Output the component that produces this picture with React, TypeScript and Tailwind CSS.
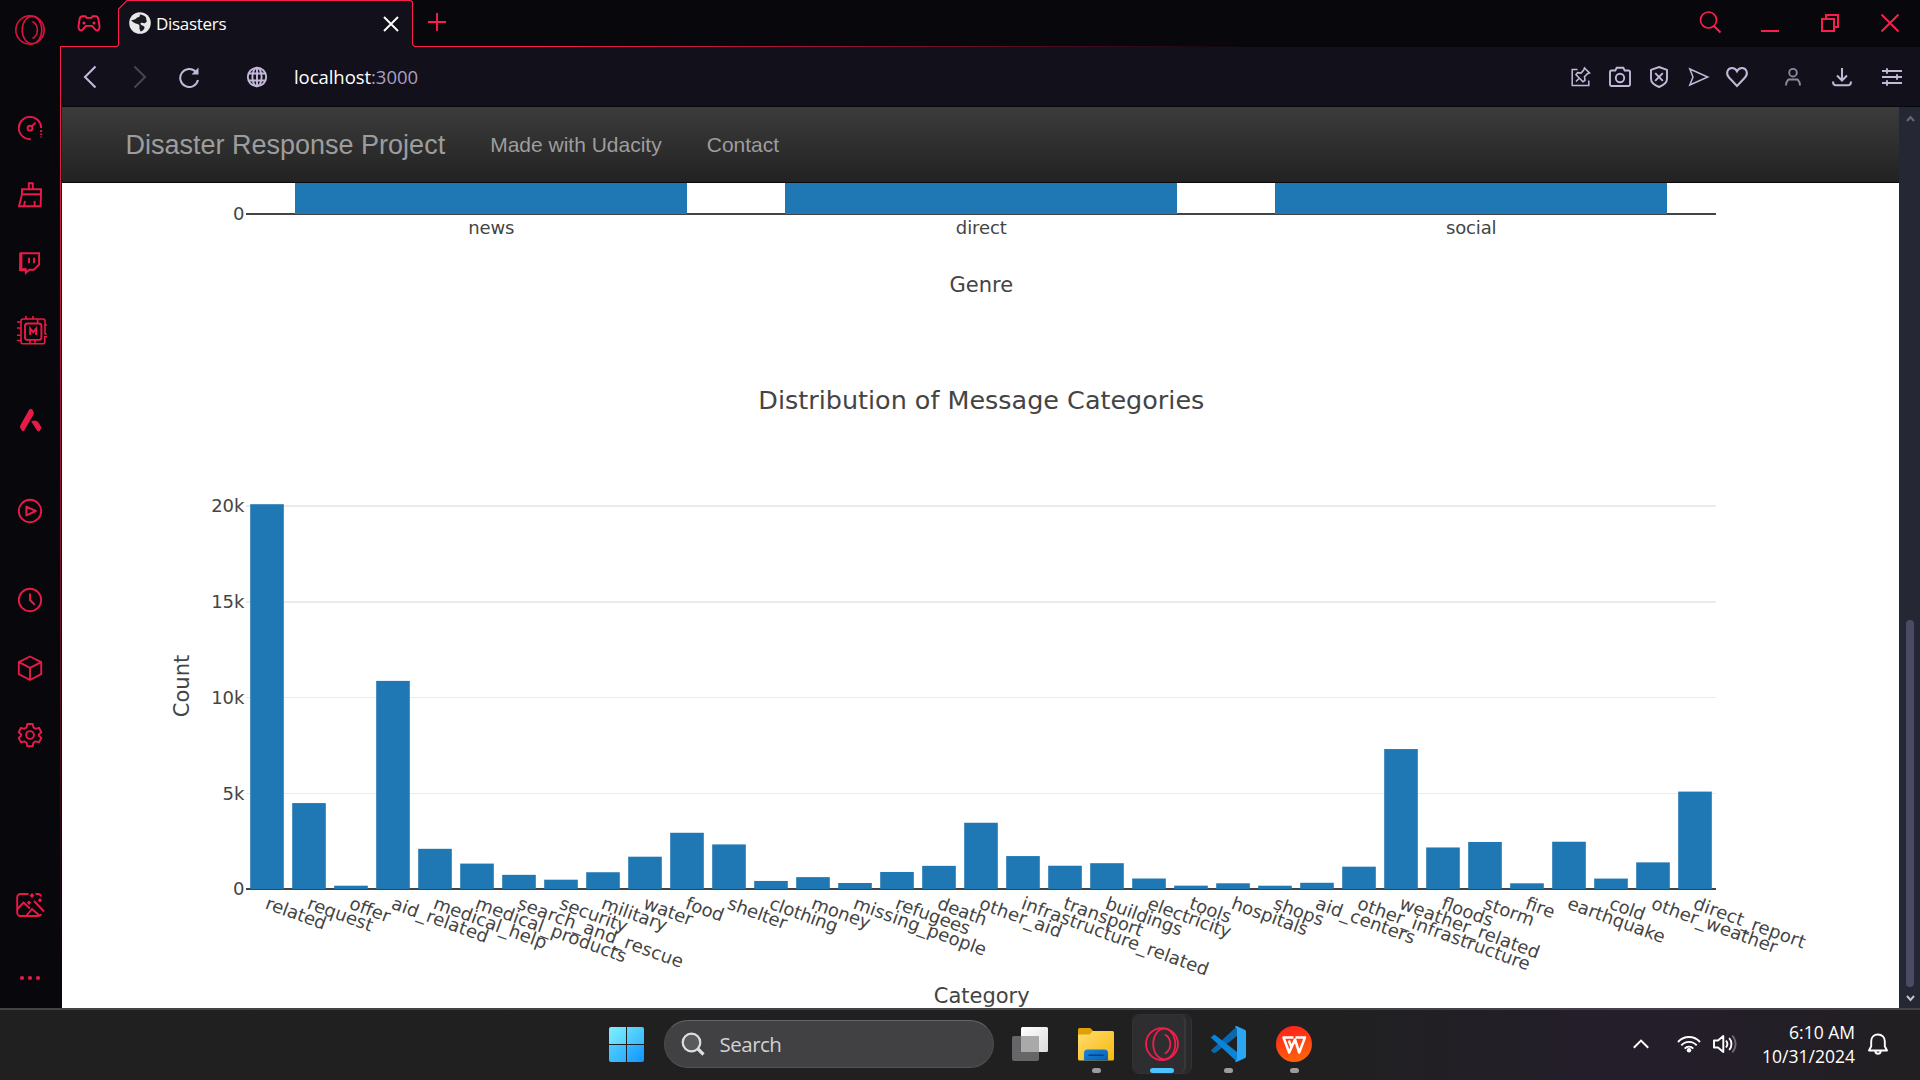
import React from "react";

type IconProps = { w: number; h?: number; vb?: string; className?: string; children: React.ReactNode };

function Icon({ w, h = w, vb, className = "", children }: IconProps) {
  return (
    <svg
      width={w}
      height={h}
      viewBox={vb ?? `0 0 ${w} ${h}`}
      fill="none"
      stroke="currentColor"
      strokeWidth={1.9}
      className={`block shrink-0 ${className}`}
    >
      {children}
    </svg>
  );
}

function OperaMark() {
  return (
    <>
      <circle cx="16" cy="16" r="14.2" />
      <ellipse cx="18" cy="16" rx="9.8" ry="13.6" />
      <path d="M18.5 7.5c6.5 3.5 6.5 13.5 0 17" />
    </>
  );
}

const sidebarItems: { cls: string; art: React.ReactNode }[] = [
  { cls: "mt-[14px] text-[#d9143f]", art: <g strokeWidth={1.6}><OperaMark /></g> },
  {
    cls: "mt-[66px]",
    art: (
      <>
        <path d="M16.8 27.2A11.2 11.2 0 1 1 27.2 16" />
        <circle cx="16" cy="16.2" r="2.4" />
        <path d="M17.8 14.4l3.8-3.8" />
        <path d="M27.2 18v2M27.2 21.5v1.6M27.2 24.5v1" />
      </>
    ),
  },
  {
    cls: "mt-[35px]",
    art: (
      <>
        <path d="M14.8 10V4.2h4V10M8 10.2h19v5H8zM8 15.2L5 27.2h21.6l.4-12M10 27l1-5M20.6 27v-5" />
      </>
    ),
  },
  {
    cls: "mt-[36px]",
    art: (
      <>
        <path d="M6.5 6.2h18.6v11.3l-5.3 5.3h-4.6l-3.4 3v-3H6z" />
        <path d="M6.9 6v17.4M5.5 22.8h7" strokeWidth={3} />
        <path d="M15 10.8v5.4M20 10.8v5.4" />
      </>
    ),
  },
  {
    cls: "mt-[36px] ml-[2px]",
    art: (
      <>
        <rect x="10" y="8.5" width="16.4" height="16.4" rx="2.5" />
        <path d="M32 18.500M32 21.800h-2.200v5a2 2 0 0 1-2 2H8a2 2 0 0 1-2-2V6a2 2 0 0 1 2-2h20a2 2 0 0 1 2 2v12.500l1.500 1" strokeWidth={1.600} />
        <path d="M30 10h2M11 4V1M18 4V1M22.600 8V4M2 7h4M2 13h4M2 20.200h4M2 25.500h4M15 29v-4M20 29v-4" strokeWidth={1.600} />
        <path d="M15.200 20v-6.500l3 3.600 3-3.600V20" strokeWidth={2} />
      </>
    ),
  },
  {
    cls: "mt-[57px]",
    art: (
      <g fill="currentColor" stroke="none">
        <path d="M14.8 6.3c1-1.8 3.500-1.800 4.100.3l.8 1.800c.3.9.2 1.500-.3 2.400L10.200 26.600c-.6 1-1.800 1-2.300 0L6.300 24c-.4-.9-.4-1.800.1-2.700z" />
        <path d="M17.300 17.200c3.600-1.200 6.100-.7 7.600 2l2.100 3.500c.4.8.3 1.200-.1 2l-1 1.800c-.7 1.200-2 1.200-2.800 0l-5.600-8.500z" />
      </g>
    ),
  },
  {
    cls: "mt-[59px]",
    art: (
      <>
        <circle cx="16" cy="16" r="11.2" />
        <path d="M12.400 11.600v8.800l9.400-4.400z" strokeLinejoin="round" strokeWidth={2} />
      </>
    ),
  },
  {
    cls: "mt-[57px]",
    art: (
      <>
        <circle cx="16" cy="16" r="11.2" />
        <path d="M16 9.500V16l4.800 4.800" strokeWidth={2} />
      </>
    ),
  },
  {
    cls: "mt-[36px]",
    art: (
      <path d="M16 4.500l11.200 5.600v12L16 28 4.800 22.100v-12zM4.800 10.100L16 15.800l11.200-5.700M16 15.800V28" strokeLinejoin="round" />
    ),
  },
  {
    cls: "mt-[35px]",
    art: (
      <>
        <circle cx="16" cy="16" r="3.900" />
        <path
          strokeLinejoin="round"
          d="M13.300 5h5.400l.7 3.400 2.300 1.400 3.300-1 2.300 4.500-2.400 2.200v1.200l2.400 2.200-2.300 4.500-3.300-1-2.300 1.400-.7 3.400h-5.400l-.7-3.400-2.300-1.400-3.300 1-2.300-4.500 2.400-2.200v-1.200L4.700 13.300 7 8.800l3.300 1 2.300-1.400z"
        />
      </>
    ),
  },
  {
    cls: "mt-[138px]",
    art: (
      <>
        <path d="M14.500 5H6.500A3.200 3.200 0 0 0 3.200 8.200v15.600A3.200 3.200 0 0 0 6.500 27h18a3 3 0 0 0 2.700-2M21.500 5h2a3.200 3.200 0 0 1 3.500 2.500" />
        <path d="M3.500 20l6-6.500L16 19.500M12.500 26.500l5.500-6.500 7.500 6.500M20 12l10 10.500" />
        <g fill="currentColor" stroke="none">
          <path d="M18 4l2.500 2.500L18 9l-2.500-2.500zM15 11.500l2.200 2.200-2.200 2.200-2.200-2.200zM26 9l2.200 2.200-2.200 2.200-2.200-2.200z" />
        </g>
      </>
    ),
  },
  {
    cls: "mt-[41px]",
    art: (
      <g fill="currentColor" stroke="none">
        <circle cx="8" cy="16" r="2.100" />
        <circle cx="16" cy="16" r="2.100" />
        <circle cx="24" cy="16" r="2.100" />
      </g>
    ),
  },
];

function Sidebar() {
  return (
    <nav className="flex h-[1008px] w-[62px] shrink-0 bg-[#08070c]">
      <div className="flex w-[60px] flex-col items-center text-[#e81b48]">
        {sidebarItems.map((it, i) => (
          <div key={i} className={it.cls}>
            <Icon w={32}>{it.art}</Icon>
          </div>
        ))}
      </div>
      <div className="mt-[46px] h-[940px] w-px bg-linear-to-b from-[#fa1e4e] via-[#8a1432] to-transparent" />
    </nav>
  );
}

function TabStrip() {
  return (
    <header className="relative flex h-[47px] w-full items-center bg-[#08070c] text-[#fa1e4e]">
      <svg className="absolute top-0 left-[-2px]" width="1860" height="47" viewBox="60 0 1860 47" fill="none">
        <defs>
          <linearGradient id="edge" gradientUnits="userSpaceOnUse" x1="60" y1="0" x2="1250" y2="0">
            <stop offset="0" stopColor="#fa1e4e" />
            <stop offset="0.4" stopColor="#fa1e4e" />
            <stop offset="1" stopColor="#fa1e4e" stopOpacity="0" />
          </linearGradient>
        </defs>
        <path d="M118.500 47V9l9-9H411l1.500 2v43l1.500 2z" fill="#12101a" />
        <path
          d="M61 46.500H117l1.500-1.500V9l8.500-8.500H411l1.500 1.500v42.500l2 2H1250"
          stroke="url(#edge)"
          strokeWidth="1.100"
        />
      </svg>
      <div className="relative flex h-full w-full items-center">
        <Icon w={24} h={20} className="ml-[15px]">
          <path
            d="M5.500 3.200h3l1 1.600h5l1-1.600h3c1.800 0 2.700 1.400 3 3.200l1 6.600c.4 4.400-2.400 5.400-4.400 3.200l-3-3.400H8.900l-3 3.400c-2 2.200-4.800 1.200-4.400-3.200l1-6.600c.3-1.800 1.200-3.200 3-3.200z"
            transform="translate(0 -.9)"
          />
          <circle cx="7" cy="9" r="1.500" fill="currentColor" stroke="none" />
          <circle cx="17" cy="9" r="1.500" fill="currentColor" stroke="none" />
        </Icon>
        <div className="ml-[28px] flex h-full w-[288px] items-center">
          <Icon w={22} className="-mt-px text-[#e6e8ea]">
            <circle cx="11" cy="11" r="10.800" fill="currentColor" stroke="none" />
            <path
              d="M2 8.500c2 1 3.500 3 5.500 3.200 1.800.3 3.500 1.200 3 3.200-.5 1.600.5 2.800 1 4.600 2.500-.5 3.500-2 4-3.700.3-1.400-1-2-2.800-2.600-1.600-.6-1.600-2-.5-2.400 1.500-.4 2.600.8 4 .2l1.600-1.400-1-4.600C15 3.500 13 2.500 10.500 2.500 11.500 4 10.500 5 9 5.200c-2 .3-1.500 2-3.500 2.300z"
              fill="#1a1c22"
              stroke="none"
            />
          </Icon>
          <span className="ml-[5px] w-[227px] font-['Open_Sans',sans-serif] text-[17px] tracking-[-0.3px] text-white">
            Disasters
          </span>
          <Icon w={16} className="text-white">
            <path d="M1 1l14 14M15 1L1 15" />
          </Icon>
        </div>
        <Icon w={18} className="ml-[11px] -mt-[3px]">
          <path d="M9 0v18M0 9h18" />
        </Icon>
        <Icon w={24} className="-mt-px ml-auto">
          <circle cx="10.500" cy="9" r="8" strokeWidth={1.700} />
          <path d="M16 15l6.500 6.500" strokeWidth={2.200} />
        </Icon>
        <Icon w={18} h={2} className="ml-[39px] mt-[15px]">
          <path d="M0 1h18" strokeWidth={2} />
        </Icon>
        <Icon w={18} className="ml-[42px] -mt-px">
          <path d="M1 5h12v12H1zM5 5V1h12v12h-4" strokeWidth={2} />
        </Icon>
        <Icon w={18} className="mr-[21px] ml-[42px] -mt-px">
          <path d="M.5.5l17 17M17.500.5l-17 17" strokeWidth={2} />
        </Icon>
      </div>
    </header>
  );
}

function Toolbar() {
  return (
    <div className="flex h-[60px] w-full items-center border-b border-[#08070c] bg-[#12101a] text-[#c3b8d9]">
      <Icon w={14} h={24} className="ml-[21px]">
        <path d="M12.500 1.500L2 12l10.500 10.500" strokeWidth={2.100} />
      </Icon>
      <Icon w={14} h={24} className="ml-[36px] text-[#474352]">
        <path d="M1.500 1.500L12 12 1.500 22.500" strokeWidth={2.100} />
      </Icon>
      <Icon w={22} className="ml-[31px]">
        <path d="M17.800 5.800A9 9 0 1 0 20 14" strokeWidth={2} />
        <path d="M20.500 1.500v7h-7z" fill="currentColor" stroke="none" />
      </Icon>
      <Icon w={22} className="ml-[46px]">
        <circle cx="11" cy="11" r="9.200" />
        <ellipse cx="11" cy="11" rx="4.600" ry="9.200" />
        <path d="M2.500 7.500h17M2.500 14.500h17M11 2v18" />
      </Icon>
      <div className="ml-[26px] font-['Open_Sans',sans-serif] text-[18.500px] tracking-[-0.05px] text-white">
        localhost<span className="text-[#a99fc0]">:3000</span>
      </div>
      <Icon w={24} className="ml-auto">
        <path d="M8.500 4.500H3.200v16h16.600v-5" strokeWidth={1.500} />
        <path d="M15.500 3l5 5-2 .8-3 3 .5 3.500-2 1.400-7-7 1.600-2 3.400.4 2.700-3zM10.500 13L7 16.500" strokeWidth={1.600} />
      </Icon>
      <Icon w={24} className="ml-[15px]">
        <path d="M3.500 5.500h3.800l1.400-2.700h6.600l1.400 2.700h3.800a1.500 1.500 0 0 1 1.500 1.500v12.500a1.500 1.500 0 0 1-1.500 1.500h-17A1.500 1.500 0 0 1 2 19.500V7a1.500 1.500 0 0 1 1.500-1.500z" />
        <circle cx="12" cy="13" r="4.200" />
      </Icon>
      <Icon w={24} className="ml-[15px]">
        <path d="M12 2l8 2.800v9c0 4-4 6.700-8 8.200-4-1.500-8-4.200-8-8.200v-9z" />
        <path d="M8.200 8.200l7.600 7.600M15.800 8.200l-7.600 7.600" />
      </Icon>
      <Icon w={24} className="ml-[16px]">
        <path d="M2.800 4l18 8-18 8L6 12z" strokeWidth={1.500} />
      </Icon>
      <Icon w={24} className="ml-[14px]">
        <path d="M12 21L4 12.500C.3 8.500 2.500 3 7 3c2.300 0 4 1.200 5 3.200C13 4.200 14.700 3 17 3c4.500 0 6.700 5.500 3 9.500z" strokeWidth={2} />
      </Icon>
      <Icon w={24} className="ml-[32px] text-[#8f879f]">
        <circle cx="12" cy="7.700" r="3.800" />
        <path d="M5 20.500c0-2.800.8-4.400 2.400-6h9.200c1.600 1.600 2.400 3.200 2.400 6" strokeWidth={2} />
      </Icon>
      <Icon w={24} className="ml-[25px]">
        <path d="M12 3v12M7 10.500l5 5 5-5M3 16.500c0 2.500 1 3.700 3 3.700h12c2 0 3-1.200 3-3.700" strokeWidth={2} />
      </Icon>
      <Icon w={24} className="mr-[16px] ml-[26px]">
        <path d="M2 6h20M2 12h20M2 18h20M7 3.300v5.400M17 9.300v5.400M7 15.300v5.400" />
      </Icon>
    </div>
  );
}

const categories: [string, number][] = [
  ["related", 20094],
  ["request", 4474],
  ["offer", 118],
  ["aid_related", 10860],
  ["medical_help", 2084],
  ["medical_products", 1313],
  ["search_and_rescue", 724],
  ["security", 471],
  ["military", 860],
  ["water", 1672],
  ["food", 2923],
  ["shelter", 2314],
  ["clothing", 405],
  ["money", 604],
  ["missing_people", 298],
  ["refugees", 875],
  ["death", 1194],
  ["other_aid", 3446],
  ["infrastructure_related", 1705],
  ["transport", 1201],
  ["buildings", 1333],
  ["electricity", 532],
  ["tools", 159],
  ["hospitals", 283],
  ["shops", 120],
  ["aid_centers", 309],
  ["other_infrastructure", 1151],
  ["weather_related", 7297],
  ["floods", 2155],
  ["storm", 2443],
  ["fire", 282],
  ["earthquake", 2455],
  ["cold", 530],
  ["other_weather", 1376],
  ["direct_report", 5075],
];

const PLOT_LEFT = 246;
const PLOT_RIGHT = 1716;
const BASE = 888.7;
const PER_COUNT = 0.019135;
const MIN_BAR = 3;
const chartText = "font-['Verdana','DejaVu_Sans',sans-serif]";

// Verdana advance widths in em, so tick labels keep their length in a fallback face.
const advance: Record<string, number> = {
  a: 0.601, b: 0.623, c: 0.521, d: 0.623, e: 0.596, f: 0.352, g: 0.623, h: 0.633, i: 0.274,
  j: 0.344, k: 0.592, l: 0.274, m: 0.973, n: 0.633, o: 0.607, p: 0.623, q: 0.623, r: 0.427,
  s: 0.521, t: 0.394, u: 0.633, v: 0.592, w: 0.818, x: 0.592, y: 0.592, z: 0.525, _: 0.636,
};
const labelWidth = (s: string) => 18 * [...s].reduce((sum, c) => sum + (advance[c] ?? 0.6), 0);

const gridLines = [
  { label: "5k", y: 793, h: 1, base: 799.5 },
  { label: "10k", y: 697, h: 1, base: 704 },
  { label: "15k", y: 601, h: 2, base: 608 },
  { label: "20k", y: 505, h: 2, base: 512 },
];

function GenreChart() {
  const genres: [string, number][] = [["news", 491], ["direct", 981], ["social", 1471]];
  return (
    <svg className={`block ${chartText}`} width="1837" height="167" viewBox="62 183 1837 167" fill="#444" fontSize="18">
      <rect x={PLOT_LEFT} y="213" width={PLOT_RIGHT - PLOT_LEFT} height="2" />
      {genres.map(([name, x]) => (
        <g key={name}>
          <rect x={x - 196} y="183" width="392" height="31" fill="#1f77b4" />
          <text x={x + 0.3} y="234" textAnchor="middle" textLength={labelWidth(name)}>{name}</text>
        </g>
      ))}
      <text x="244.500" y="220" textAnchor="end">0</text>
      <text x="981.300" y="291.700" textAnchor="middle" fontSize="21">Genre</text>
    </svg>
  );
}

function CategoryChart() {
  const step = (PLOT_RIGHT - PLOT_LEFT) / categories.length;
  return (
    <svg className={`block ${chartText}`} width="1837" height="658" viewBox="62 350 1837 658" fill="#444" fontSize="18">
      <text x="981.300" y="408.500" textAnchor="middle" fontSize="25.500" textLength="446" lengthAdjust="spacingAndGlyphs">
        Distribution of Message Categories
      </text>
      {gridLines.map((g) => (
        <g key={g.label}>
          <rect x={PLOT_LEFT} y={g.y} width={PLOT_RIGHT - PLOT_LEFT} height={g.h} fill="#ebebeb" />
          <text x="244.500" y={g.base} textAnchor="end">{g.label}</text>
        </g>
      ))}
      <text x="244.500" y="895" textAnchor="end">0</text>
      <rect x={PLOT_LEFT} y="888" width={PLOT_RIGHT - PLOT_LEFT} height="2" />
      {categories.map(([name, count], i) => {
        const cx = PLOT_LEFT + step * (i + 0.5);
        const h = Math.max(count * PER_COUNT, MIN_BAR);
        return <rect key={name} x={cx - 16.8} y={BASE - h} width="33.600" height={h + 0.3} fill="#1f77b4" />;
      })}
      {categories.map(([name], i) => {
        const cx = PLOT_LEFT + step * (i + 0.5);
        return (
          <text key={name} transform={`translate(${cx - 2.8} 908.300) rotate(20)`} textLength={labelWidth(name)}>
            {name}
          </text>
        );
      })}
      <text transform="translate(189 686) rotate(-90)" textAnchor="middle" fontSize="21">Count</text>
      <text x="981.700" y="1002.500" textAnchor="middle" fontSize="21">Category</text>
    </svg>
  );
}

function Scrollbar() {
  return (
    <div className="flex h-full w-[21px] shrink-0 flex-col items-center bg-[#252834]">
      <Icon w={9} h={7} className="mt-[8px] mr-[-2px] text-[#68686c]">
        <path d="M1 6l3.500-4L8 6" strokeWidth={2} />
      </Icon>
      <div className="mt-[498px] h-[367px] w-[8px] mr-[-1px] rounded-full bg-[#4b4c64]" />
      <Icon w={9} h={7} className="mt-[8px] mr-[-2px] text-[#c4c4c8]">
        <path d="M1 1l3.500 4L8 1" strokeWidth={2} />
      </Icon>
    </div>
  );
}

function WebPage() {
  return (
    <div className="flex h-[901px] w-full bg-white">
      <main className="flex w-[1837px] flex-col">
        <div className="flex h-[76px] shrink-0 items-center border-b border-[#080808] bg-linear-to-b from-[#3c3c3c] to-[#222] font-['Liberation_Sans',Arial,sans-serif] text-[21px] text-[#9d9d9d]">
          <span className="mt-px ml-[63.500px] text-[27px]">Disaster Response Project</span>
          <span className="ml-[45px]">Made with Udacity</span>
          <span className="ml-[45px]">Contact</span>
        </div>
        <GenreChart />
        <CategoryChart />
      </main>
      <Scrollbar />
    </div>
  );
}

function PinnedApp({ running = false, children }: { running?: boolean; children: React.ReactNode }) {
  return (
    <div className="flex w-[36px] flex-col items-center pt-[16px]">
      {children}
      {running && <div className="mt-[6px] h-[5px] w-[9px] rounded-full bg-[#9c9c9c]" />}
    </div>
  );
}

function Taskbar() {
  return (
    <footer className="flex h-[72px] w-full border-t-2 border-[#444246] bg-linear-to-r from-[#202021] from-70% via-[#241e2b] via-85% to-[#211f21] font-['Open_Sans',sans-serif]">
      <div className="ml-[609px] grid h-[35px] w-[35px] mt-[17px] grid-cols-2 gap-px overflow-hidden rounded-[2px]">
        <div className="bg-linear-to-br from-[#7df0ff] to-[#56d2fd]" />
        <div className="bg-linear-to-br from-[#60d8ff] to-[#38baff]" />
        <div className="bg-linear-to-br from-[#50cbff] to-[#2bb0ff]" />
        <div className="bg-linear-to-br from-[#36b8ff] to-[#0c98ff]" />
      </div>
      <div className="mt-[10px] ml-[20px] flex h-[48px] w-[330px] items-center rounded-full border border-x-[#4c4c4f] border-t-[#646466] border-b-[#525254] bg-[#414143]">
        <Icon w={24} className="ml-[16px] text-[#dcdfe2]">
          <circle cx="10.500" cy="10.500" r="8.800" fill="#5a5a5d" strokeWidth={2.200} />
          <path d="M17 17l5.500 5.500" strokeWidth={3.200} />
        </Icon>
        <span className="mt-px ml-[14.500px] text-[20.500px] tracking-[-0.5px] text-[#d2d2d2]">Search</span>
      </div>
      <div className="ml-[18px]">
        <PinnedApp>
          <Icon w={36}>
            <defs>
              <linearGradient id="tv" x1="0" y1="0" x2="1" y2="1">
                <stop stopColor="#fff" />
                <stop offset="1" stopColor="#dcdcdc" />
              </linearGradient>
            </defs>
            <rect x="0" y="10" width="27" height="25" rx="2" fill="#666668" stroke="none" />
            <rect x="9" y="1" width="27" height="25" rx="1.500" fill="url(#tv)" stroke="none" />
            <rect x="9" y="10" width="18" height="16" fill="#a9a9a9" stroke="none" />
          </Icon>
        </PinnedApp>
      </div>
      <div className="ml-[30px]">
        <PinnedApp running>
          <Icon w={36}>
            <defs>
              <linearGradient id="fold" x1="0" y1="0" x2="1" y2="1">
                <stop stopColor="#ffdc70" />
                <stop offset="1" stopColor="#f7b90c" />
              </linearGradient>
              <linearGradient id="tray" x1="0" y1="0" x2="1" y2="1">
                <stop stopColor="#1586da" />
                <stop offset="1" stopColor="#0a5eb4" />
              </linearGradient>
            </defs>
            <path d="M0 9V3.500A1.500 1.500 0 0 1 1.500 2h9.800c1 0 1.500.4 2.200 1.200L16 6l-3 4z" fill="#e0a106" stroke="none" />
            <path d="M0 8.500h10.500c1 0 1.700-.4 2.400-1.200L14.500 5H34.500A1.500 1.500 0 0 1 36 6.500V33a1.500 1.500 0 0 1-1.500 1.500h-33A1.500 1.500 0 0 1 0 33z" fill="url(#fold)" stroke="none" />
            <path d="M6 34.500V27c0-2 1.300-3.500 3.400-3.500h17.200c2.100 0 3.400 1.500 3.400 3.500v7.500z" fill="url(#tray)" stroke="none" />
            <path d="M11 29.200h14" stroke="#083f80" strokeWidth={1.600} strokeLinecap="round" />
          </Icon>
        </PinnedApp>
      </div>
      <div className="mt-[4px] ml-[18px] h-[60px] w-[60px] rounded-[7px] border border-[#323234] bg-[#29292b]">
        <div className="flex h-[58px] w-[53px] flex-col items-center rounded-[6px] border-r-2 border-[#38383b] bg-[#2e2e30] pt-[11px]">
          <Icon w={36} vb="0 0 32 32" className="ml-[7px] text-[#f21d4c]">
            <g strokeWidth={1.600}><OperaMark /></g>
          </Icon>
          <div className="mt-[6px] ml-[7px] h-[5px] w-[24px] shrink-0 rounded-full bg-[#4cc2ff]" />
        </div>
      </div>
      <div className="ml-[18px]">
        <PinnedApp running>
          <Icon w={36}>
            <g stroke="none">
              <path d="M.8 24.500l2.500 2.300c.7.6 1.500.6 2.200 0L27 10V.2z" fill="#0968ae" />
              <path d="M.8 11.500l2.500-2.300c.7-.6 1.500-.6 2.200 0L27 26v9.800z" fill="#0a84d6" />
              <path d="M25 .8c.6-.8 1.200-.9 2-.5l7.700 3.500c.8.4 1.300 1 1.300 2v24.400c0 1-.5 1.600-1.300 2L27 35.700c-.8.4-1.400.3-2-.5l2-2V2.800z" fill="#2aa6f2" />
            </g>
          </Icon>
        </PinnedApp>
      </div>
      <div className="ml-[30px]">
        <PinnedApp running>
          <Icon w={36}>
            <defs>
              <linearGradient id="wps" x1="0" y1="0" x2="0.300" y2="1">
                <stop stopColor="#ff1c1c" />
                <stop offset="1" stopColor="#ff5f0c" />
              </linearGradient>
            </defs>
            <circle cx="18" cy="18" r="18" fill="url(#wps)" stroke="none" />
            <path d="M17.500 11.500H7.500l5.700 15L19 13.500l4.200 13 5.800-15h-9.500M12.800 14.500l2.400 6" stroke="#fff" strokeWidth={2.500} strokeLinejoin="round" />
          </Icon>
        </PinnedApp>
      </div>
      <div className="ml-auto flex h-[68px] items-center text-white">
        <Icon w={16} h={10} className="mr-[28px]">
          <path d="M.8 8.800L8 1.600l7.200 7.200" strokeWidth={2} />
        </Icon>
        <Icon w={24} h={18}>
          <path d="M1 7c6-6.600 16-6.600 22 0M4.300 10.400c4.200-4.700 11.200-4.700 15.400 0M7.700 13.600c2.400-2.700 6.200-2.700 8.600 0" strokeWidth={1.900} />
          <circle cx="12" cy="15.200" r="2.200" fill="currentColor" stroke="none" />
        </Icon>
        <Icon w={24} h={20} className="ml-[12px]">
          <path d="M1 6.500h4L10.300 2v16L5 13.500H1z" strokeLinejoin="round" />
          <path d="M13 6.500c1.600 2 1.600 5 0 7M16.200 4c3 3.500 3 8.500 0 12" />
          <path d="M19.300 1.500c4.300 5 4.300 12 0 17" stroke="#6d6873" />
        </Icon>
        <div className="-mt-px ml-[23px] w-[95px] text-right text-[17.500px] leading-[24px] whitespace-nowrap">
          <div>6:10 AM</div>
          <div>10/31/2024</div>
        </div>
        <Icon w={20} h={22} className="mr-[32px] ml-[13px]">
          <path d="M10 1.500c-4 0-6.800 2.800-6.800 6.700v5L1 17.500h18l-2.200-4.300v-5c0-3.900-2.800-6.700-6.800-6.700zM7.200 18c.5 3.600 5.100 3.600 5.600 0" strokeLinejoin="round" />
        </Icon>
      </div>
    </footer>
  );
}

export default function App() {
  return (
    <div className="flex h-[1080px] w-[1920px] flex-col overflow-hidden bg-[#08070c]">
      <div className="flex h-[1008px]">
        <Sidebar />
        <div className="flex w-[1858px] flex-col">
          <TabStrip />
          <Toolbar />
          <WebPage />
        </div>
      </div>
      <Taskbar />
    </div>
  );
}
